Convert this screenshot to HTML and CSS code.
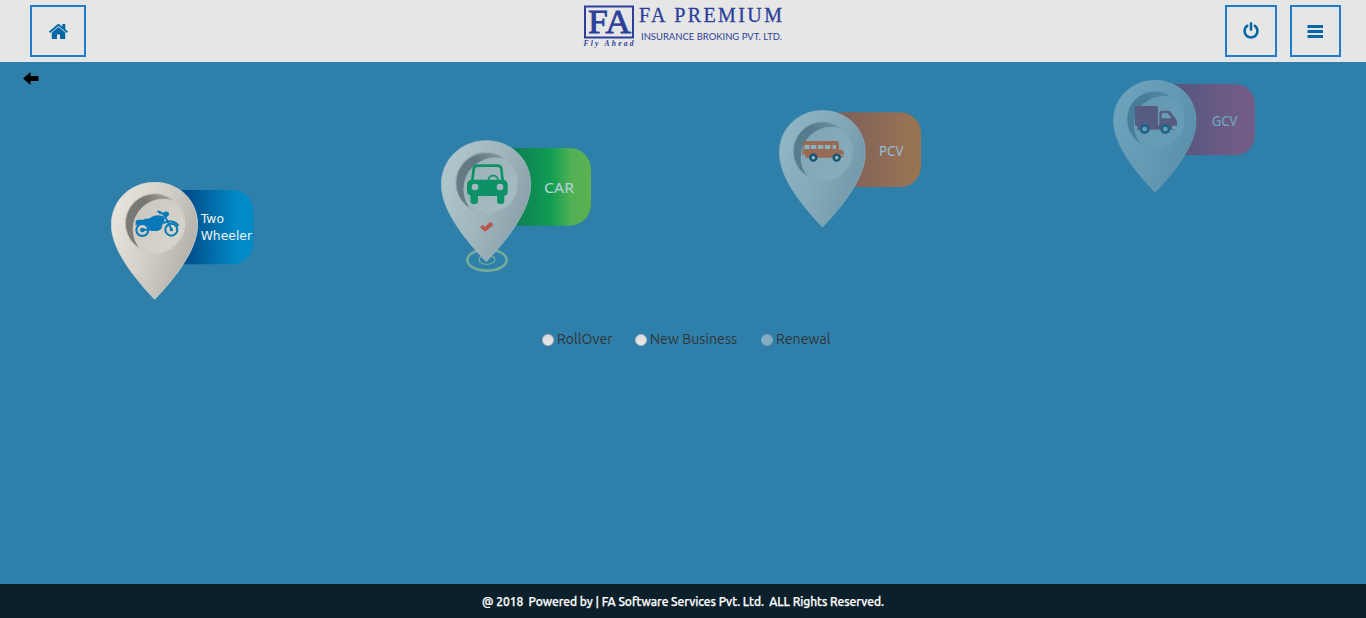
FILE: index.html
```html
<!DOCTYPE html>
<html lang="en">
<head>
<meta charset="utf-8">
<title>FA Premium Insurance Broking</title>
<link rel="stylesheet" href="styles.css">
</head>
<body>
<svg class="defs" width="0" height="0" aria-hidden="true">
  <defs>
    <linearGradient id="pinFill" x1="0" y1="0.2" x2="1" y2="0.65"><stop offset="0" stop-color="#e9e6dd"/><stop offset="0.5" stop-color="#d2cfc7"/><stop offset="1" stop-color="#aeaca6"/></linearGradient>
    <linearGradient id="holeFill" x1="0" y1="0.6" x2="0.7" y2="0"><stop offset="0" stop-color="#7d7b76"/><stop offset="0.6" stop-color="#77756f"/><stop offset="1" stop-color="#a5a29a"/></linearGradient>
    <linearGradient id="discFill" x1="0" y1="0" x2="1" y2="1"><stop offset="0" stop-color="#c8c5bd"/><stop offset="1" stop-color="#dedbd3"/></linearGradient>
    <linearGradient id="rimFill" x1="0" y1="0" x2="1" y2="1"><stop offset="0" stop-color="#bab7af"/><stop offset="1" stop-color="#e8e5de"/></linearGradient>
    <clipPath id="holeClip"><circle cx="132" cy="124" r="88"/></clipPath>
    <symbol id="pin" viewBox="0 0 261 354">
      <path fill="url(#pinFill)" stroke="#dedbd3" stroke-width="2" d="M131 1C203 1 260 55 260 128C260 207 184 296 131 352C78 296 1 207 1 128C1 55 59 1 131 1Z"/>
      <circle cx="132" cy="124" r="89" fill="url(#holeFill)" stroke="url(#rimFill)" stroke-width="3"/>
      <circle cx="157" cy="142" r="92" fill="url(#discFill)" clip-path="url(#holeClip)"/>
    </symbol>
    <linearGradient id="blue"><stop offset="0.38" stop-color="#00508e"/><stop offset="0.85" stop-color="#008bc7"/></linearGradient>
    <linearGradient id="green"><stop offset="0.35" stop-color="#008432"/><stop offset="0.63" stop-color="#03a82c"/><stop offset="0.82" stop-color="#5fc62f"/><stop offset="1" stop-color="#70c52a"/></linearGradient>
    <linearGradient id="orange"><stop offset="0.25" stop-color="#c64710"/><stop offset="0.8" stop-color="#f3630c"/><stop offset="1" stop-color="#f86c00"/></linearGradient>
    <linearGradient id="purple"><stop offset="0.3" stop-color="#a90b33"/><stop offset="0.85" stop-color="#f01a3c"/></linearGradient>
  </defs>
</svg>

<header class="topbar">
  <a class="icon-btn home" aria-label="Home"><svg width="21" height="21" viewBox="0 0 1792 1792"><path d="M1472 992v480q0 26-19 45t-45 19h-384v-384h-256v384h-384q-26 0-45-19t-19-45v-480q0-1 .5-3t.5-3l575-474 575 474q1 2 1 6zm223-69l-62 74q-8 9-21 11h-3q-13 0-21-7l-692-577-692 577q-12 8-24 7-13-2-21-11l-62-74q-8-10-7-23.500t11-21.500l719-599q32-26 76-26t76 26l244 204v-195q0-14 9-23t23-9h192q14 0 23 9t9 23v408l219 182q10 8 11 21.500t-7 23.500z"/></svg></a>
  <svg class="logo" width="201" height="44" viewBox="0 0 201 44">
    <rect x="2" y="1.500" width="48" height="31"/>
    <text class="mark" x="5" y="28" textLength="43" lengthAdjust="spacingAndGlyphs">FA</text>
    <text class="motto" x="0.500" y="41" textLength="50">Fly Ahead</text>
    <text class="name" x="56" y="17" textLength="143">FA PREMIUM</text>
    <text class="sub" x="58" y="35" textLength="141" lengthAdjust="spacingAndGlyphs">INSURANCE BROKING PVT. LTD.</text>
  </svg>
  <div class="actions">
    <a class="icon-btn power" aria-label="Log out"><svg width="18" height="18" viewBox="0 0 1792 1792"><path d="M1664 896q0 156-61 298t-164 245-245 164-298 61-298-61-245-164-164-245-61-298q0-182 80.500-343t226.500-270q43-32 95.500-25t83.500 50q32 42 24.500 94.500t-49.500 84.500q-98 74-151.500 181t-53.500 228q0 104 40.500 198.500t109.500 163.500 163.500 109.500 198.500 40.500 198.500-40.500 163.500-109.500 109.500-163.500 40.500-198.500q0-121-53.500-228t-151.500-181q-42-32-49.500-84.500t24.500-94.500q31-43 84-50t95 25q146 109 226.500 270t80.500 343zm-640-768v640q0 52-38 90t-90 38-90-38-38-90v-640q0-52 38-90t90-38 90 38 38 90z"/></svg></a>
    <a class="icon-btn menu" aria-label="Menu"><svg width="17" height="13" viewBox="0 0 17 13"><path d="M.5 0h15.500v3H.5zM.5 5h15.500v3H.5zM.5 10h15.500v3H.5z"/></svg></a>
  </div>
</header>

<main class="page">
  <a class="back" aria-label="Back"><svg width="16" height="13" viewBox="0 0 16 13"><path d="M0 6.500L7.500 0V4H15.500V9H7.500V13Z"/></svg></a>
  <section class="products">
    <svg class="product two" width="143" height="118" viewBox="33 36 429 354">
      <rect x="150" y="60" width="310" height="223" rx="62" fill="url(#blue)"/>
      <use href="#pin" x="33" y="36" width="261" height="354"/>
      <g fill="none" stroke="#0879b8" stroke-width="6"><circle cx="127" cy="180" r="18"/><circle cx="214" cy="179" r="18"/><path d="M191 131L216 181M178 126L190 132M126 180L159 178M190 160C203 151 226 151 235 168"/></g>
      <path fill="#0879b8" d="M107 153C112 147 124 150 130 149C142 142 147 149 153 142C165 134 178 134 193 140L188 134C188 122 207 122 207 132C207 141 198 142 194 140C195 151 190 158 187 165C187 184 169 184 155 183C150 183 149 173 143 168C132 157 118 165 107 166Z"/>
      <path fill="#0879b8" d="M170 124L176 121L184 129L180 133Z"/><circle cx="127" cy="180" r="7" fill="#0879b8"/><circle cx="214" cy="179" r="5" fill="#0879b8"/>
      <text class="dense" x="302" y="159" textLength="70">Two</text>
      <text class="dense" x="302" y="210" textLength="154">Wheeler</text>
    </svg>
    <svg class="product car" width="150" height="132" viewBox="33 30 450 396">
      <rect x="150" y="54" width="333" height="233" rx="64" fill="url(#green)"/>
      <g fill="none" stroke="#92bc91"><ellipse cx="171" cy="390" rx="59" ry="32" stroke-width="8"/><ellipse cx="171" cy="389" rx="24" ry="14" stroke-width="4"/></g>
      <use href="#pin" x="33" y="30" width="270" height="368"/>
      <path fill="none" stroke="#03994b" stroke-width="8" d="M127 152L131 117Q132 107 143 107H202Q213 107 214 117L218 152"/>
      <path fill="none" stroke="#03994b" stroke-width="5" d="M175 151C175 132 204 132 204 151"/>
      <path fill="#03994b" d="M122 149H222Q233 153 233 165V186Q233 195 223 197V212Q223 222 212 222Q201 222 201 212V198H144V212Q144 222 133 222Q121 222 121 212V196Q111 193 111 184V165Q111 153 122 149Z"/>
      <circle cx="135" cy="171" r="10" fill="#d4d1c9"/><circle cx="210" cy="171" r="10" fill="#d4d1c9"/>
      <path fill="#f6442c" d="M150 292L157 285L165 291L181 275L188 282V287L165 305Z"/>
      <text class="wide" x="342" y="189" textLength="90" lengthAdjust="spacingAndGlyphs">CAR</text>
    </svg>
    <svg class="product pcv" width="142" height="118" viewBox="27 30 426 354">
      <rect x="150" y="37" width="303" height="224" rx="62" fill="url(#orange)"/>
      <use href="#pin" x="27" y="30" width="260" height="354"/>
      <path fill="#f75a09" d="M99 128Q99 123 105 123H200Q207 123 207 130V149H214Q222 151 222 160V167L215 173H106L97 165V151H99Z"/>
      <path fill="#dedbd3" d="M104 135H119V147H102ZM123 135H139V147H123ZM144 135H160V147H144ZM165 135H181V147H165ZM188 135H198V147H188ZM98 163L106 166V173H101ZM220 160V167H211Z"/>
      <g fill="#dedbd3" stroke="#00283d" stroke-width="7"><circle cx="130" cy="173" r="9"/><circle cx="200" cy="173" r="9"/></g>
      <text x="327" y="168" textLength="73" lengthAdjust="spacingAndGlyphs">PCV</text>
    </svg>
    <svg class="product gcv" width="142" height="113" viewBox="39 30 426 339">
      <rect x="150" y="42" width="315" height="214" rx="60" fill="url(#purple)"/>
      <use href="#pin" x="39" y="30" width="251" height="339"/>
      <path fill="#a41535" d="M105 108H174V165H178V131Q178 122 187 122H204Q208 122 212 126L229 149Q231 152 231 158V171L225 179H107L105 169Z"/>
      <path fill="#dedbd3" d="M185 134Q185 129 190 129H202L213 142V145H185ZM105 167L113 169L111 179L105 177ZM230 166V178H216V169Z"/>
      <g fill="#dedbd3" stroke="#002c46" stroke-width="8"><circle cx="134" cy="177" r="11"/><circle cx="196" cy="177" r="11"/></g>
      <text x="335" y="168" textLength="77" lengthAdjust="spacingAndGlyphs">GCV</text>
    </svg>
  </section>
  <form class="business">
    <label><input type="radio" name="kind"><span>RollOver</span></label>
    <label><input type="radio" name="kind"><span>New Business</span></label>
    <label><input type="radio" name="kind" disabled><span>Renewal</span></label>
  </form>
</main>
<footer class="footer"><span>@ 2018&nbsp; Powered by | FA Software Services Pvt. Ltd.&nbsp; ALL Rights Reserved.</span></footer>
</body>
</html>
```
FILE: styles.css
```css
* { box-sizing: border-box; }
body {
  margin: 0;
  height: 618px;
  display: flex;
  flex-direction: column;
  overflow: hidden;
  background: #2e80ab;
  font-family: Ubuntu, "Noto Sans", sans-serif;
}
svg { display: block; flex: none; }
.defs { position: absolute; }
.topbar {
  height: 62px;
  padding: 5px 25px 0 30px;
  display: grid;
  grid-template-columns: 1fr 201px 1fr;
  align-items: start;
  background: #e6e6e6;
}
.icon-btn {
  height: 52px;
  display: flex;
  align-items: center;
  justify-content: center;
  border: 2px solid #1e7dcd;
  fill: #0567a5;
}
.home { width: 56px; }
.power { width: 52px; }
.menu { width: 51px; }
.actions { display: flex; justify-content: flex-end; gap: 13px; }
.logo { justify-self: center; margin-left: -5px; overflow: visible; fill: #2b3f9b; }
.logo rect { fill: none; stroke: #2b3f9b; stroke-width: 2; }
.logo text { font-family: "Liberation Serif", serif; }
.logo .mark { font-size: 34px; stroke: #2b3f9b; stroke-width: 0.8px; }
.logo .motto { font-size: 7.5px; font-style: italic; font-weight: bold; }
.logo .name { font-size: 20px; stroke: #2b3f9b; stroke-width: 0.3px; }
.logo .sub { font-family: Lato, sans-serif; font-size: 8.5px; }
.page { flex: 1; padding-top: 10px; }
.back { display: block; width: 16px; margin-left: 23px; }
.products {
  display: flex;
  align-items: flex-start;
  height: 233px;
  padding-left: 111px;
  margin-top: -5px;
}
.product text { font-family: "Noto Sans", sans-serif; font-size: 41px; fill: #f0f3f2; }
.product .dense { font-family: "DejaVu Sans", sans-serif; font-size: 37px; }
.product .wide { font-size: 45px; }
.two { margin-top: 102px; }
.car { margin: 60px 0 0 187px; opacity: 0.7; }
.pcv { margin: 30px 0 0 188px; opacity: 0.53; }
.gcv { margin-left: 192px; opacity: 0.34; }
.business {
  display: flex;
  margin: 16px 0 0 542px;
  color: #333;
  font-size: 14px;
  letter-spacing: 0.1px;
  line-height: 20px;
}
.business label { display: flex; align-items: center; gap: 3px; }
.business label:nth-child(1) { width: 93px; }
.business label:nth-child(2) { width: 126px; }
.business input {
  appearance: none;
  width: 12px;
  height: 12px;
  margin: 1px 0 0;
  border: 1px solid #b9bdbf;
  border-radius: 50%;
  background: linear-gradient(#dcdcdc, #e8e8e8);
}
.business input:disabled { border-color: #79a5bd; background: #86adc3; }
.business span { white-space: nowrap; }
.footer {
  height: 34px;
  display: flex;
  align-items: center;
  justify-content: center;
  background: #0c202b;
  color: #fff;
  font-size: 12px;
  font-weight: 500;
  letter-spacing: -0.05px;
  -webkit-text-stroke: 0.25px #fff;
  white-space: nowrap;
}
```
